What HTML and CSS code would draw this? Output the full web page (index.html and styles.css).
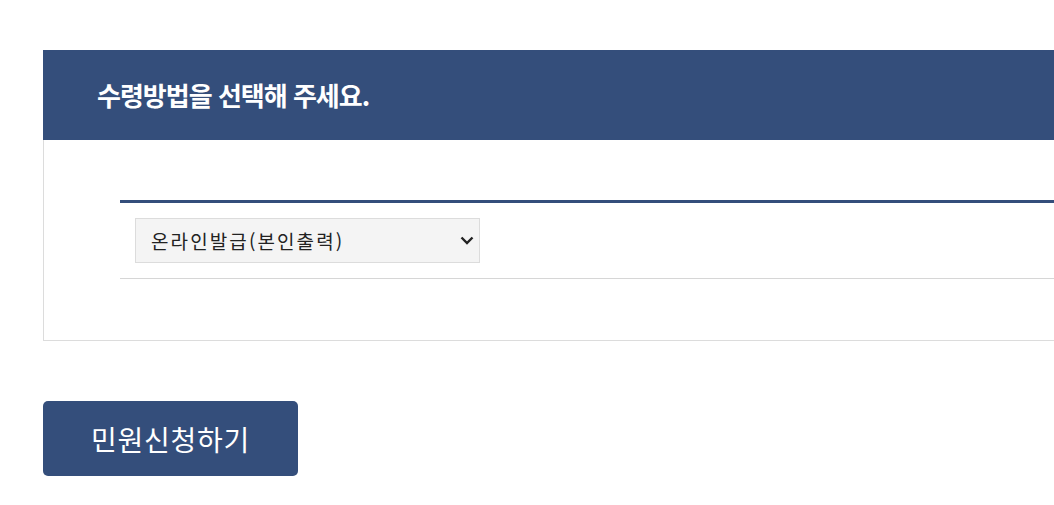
FILE: index.html
```html
<!DOCTYPE html>
<html lang="ko">

<head>
  <meta charset="UTF-8">
  <meta name="viewport" content="width=device-width, initial-scale=1.0">
  <title>수령방법 선택</title>
  <link rel="stylesheet" href="styles.css">
</head>

<body>

  <div id="wrap">
    <div class="panel">
      <h2 class="panel-title">수령방법을 선택해 주세요.</h2>
      <div class="panel-body">
        <div class="select-row">
          <div class="select-box">
            <select id="receive">
              <option>온라인발급(본인출력)</option>
              <option>우편수령</option>
              <option>방문수령</option>
            </select>
            <svg class="arrow" width="14" height="9" viewBox="0 0 14 9">
              <path d="M1.5 1.5 L7 7 L12.5 1.5" fill="none" stroke="#222" stroke-width="2.4" />
            </svg>
          </div>
        </div>
      </div>
    </div>
    <button class="btn-apply" type="button">민원신청하기</button>
  </div>

</body>

</html>
```

FILE: styles.css
```css
* {
  margin: 0;
  padding: 0;
  box-sizing: border-box;
}

html,
body {
  overflow: hidden;
}

body {
  font-family: "Noto Sans CJK KR", "Noto Sans", sans-serif;
  color: #222;
  background: #fff;
}

#wrap {
  padding: 50px 0 0 43px;
  width: 1200px;
}

.panel-title {
  height: 90px;
  line-height: 90px;
  padding-left: 54px;
  background: #344e7b;
  color: #ffffff;
  font-size: 26px;
  font-weight: 700;
  letter-spacing: -1px;
}

.panel-body {
  border: 1px solid #dcdcdc;
  border-top: 0;
  padding: 60px 0 61px 76px;
}

.select-row {
  border-top: 3px solid #344e7b;
  border-bottom: 1px solid #d6d6d6;
  padding: 15px 0 15px 15px;
}

.select-box {
  position: relative;
  width: 345px;
}

.select-box select {
  appearance: none;
  -webkit-appearance: none;
  display: block;
  width: 345px;
  height: 45px;
  padding: 0 40px 0 15px;
  border: 1px solid #dcdcdc;
  background: #f4f4f4;
  color: #222;
  font-family: inherit;
  font-size: 19px;
  letter-spacing: 2.1px;
  outline: none;
}

.select-box .arrow {
  position: absolute;
  right: 6px;
  top: 18px;
  pointer-events: none;
}

.btn-apply {
  display: block;
  margin-top: 60px;
  width: 255px;
  height: 75px;
  border: 0;
  border-radius: 5px;
  background: #344e7b;
  color: #ffffff;
  font-family: inherit;
  font-size: 28px;
  letter-spacing: 0.7px;
  cursor: pointer;
}
```
